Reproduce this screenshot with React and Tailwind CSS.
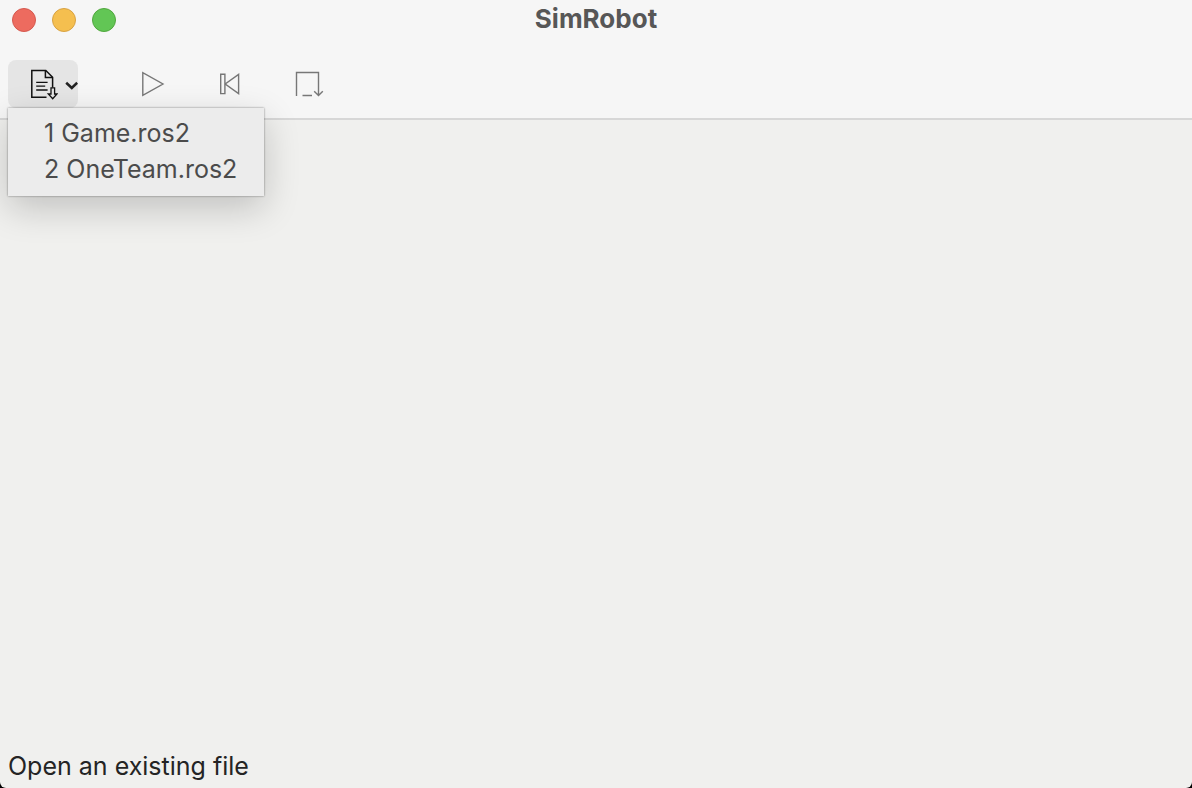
import React from "react";

const files = ["1 Game.ros2", "2 OneTeam.ros2"];

function TitleBar() {
  return (
    <header className="grid h-10 grid-cols-[1fr_auto_1fr] items-center px-3">
      <div className="flex gap-4">
        <button aria-label="Close" className="size-6 rounded-full border border-[#d5594f] bg-[#ed6b5f]" />
        <button aria-label="Minimize" className="size-6 rounded-full border border-[#d8a243] bg-[#f5bf4f]" />
        <button aria-label="Zoom" className="size-6 rounded-full border border-[#51a73e] bg-[#62c655]" />
      </div>
      <h1 className="pb-0.5 text-[26px] leading-8 font-bold text-[#575757]">SimRobot</h1>
    </header>
  );
}

function OpenIcon() {
  return (
    <svg className="h-8 w-7" viewBox="0 0 28 32" fill="none" stroke="#111" strokeWidth="1.5">
      <path d="M16.5 29.3H1.8V2.4H15.8L22.6 9.2V19.5" />
      <path d="M15.4 2.8V9.6H22.2" />
      <path d="M6.2 14.4H17.6M6.2 18.2H15.2M6.2 22H17.6" strokeWidth="1.3" />
      <path d="M21 19.8H24.6V26H27L22.7 30.7L18.3 26H21Z" strokeWidth="1.3" />
    </svg>
  );
}

function Toolbar() {
  return (
    <div className="flex h-20 items-start border-b-2 border-[#d7d7d7] px-2 pt-5">
      <div className="relative">
        <button
          aria-label="Open"
          aria-haspopup="menu"
          aria-expanded="true"
          className="flex h-12 w-[70px] items-center justify-between rounded-lg bg-[#e5e5e5] pl-[22px]"
        >
          <OpenIcon />
          <svg className="h-3 w-3.5" viewBox="0 0 14 12" fill="none" stroke="#222" strokeWidth="2.6">
            <path d="M2.2 4.8L7.8 9.9L13.2 4.8" />
          </svg>
        </button>
        <ul
          role="menu"
          className="absolute top-full left-0 z-10 flex w-64 flex-col bg-[#ececec] pt-[7px] pb-[9px] shadow-[0_0_2px_rgba(0,0,0,0.45),0_12px_36px_rgba(0,0,0,0.2)]"
        >
          {files.map((name) => (
            <li key={name} role="none">
              <button role="menuitem" className="block h-9 w-full pl-9 text-left text-[25px] leading-9 whitespace-nowrap text-[#4b4b4b]">
                {name}
              </button>
            </li>
          ))}
        </ul>
      </div>
      <div className="flex gap-[30px] pl-[50px]">
        <button aria-label="Start" className="flex size-12 items-center justify-center">
          <svg className="size-8" viewBox="0 0 32 32" fill="none" stroke="#777" strokeWidth="1.4">
            <path d="M6.8 4.6V27.4L27 16Z" />
          </svg>
        </button>
        <button aria-label="Reset" className="flex size-12 items-center justify-center">
          <svg className="size-8" viewBox="0 0 32 32" fill="none" stroke="#777" strokeWidth="1.4">
            <path d="M6.7 6.2H10.9V25.6H6.7ZM24.6 6.4V25.6L11.2 16Z" />
          </svg>
        </button>
        <button aria-label="Step" className="flex size-12 items-center justify-center">
          <svg className="size-8" viewBox="0 0 32 32" fill="none" stroke="#777" strokeWidth="1.4">
            <path d="M4.5 28V4.5H26.5V27M10.5 27.5H20M22.2 23.2L26.5 27.5L30.8 23.2" />
          </svg>
        </button>
      </div>
    </div>
  );
}

export default function App() {
  return (
    <div className="min-h-screen bg-black font-['Inter',sans-serif]">
      <div className="flex min-h-screen flex-col overflow-hidden rounded-b-md bg-[#f0f0ee]">
        <div className="bg-[#f6f6f6]">
          <TitleBar />
          <Toolbar />
        </div>
        <main className="flex-1" />
        <footer className="px-2 pb-1 text-[25px] leading-9 text-[#242424]">Open an existing file</footer>
      </div>
    </div>
  );
}
